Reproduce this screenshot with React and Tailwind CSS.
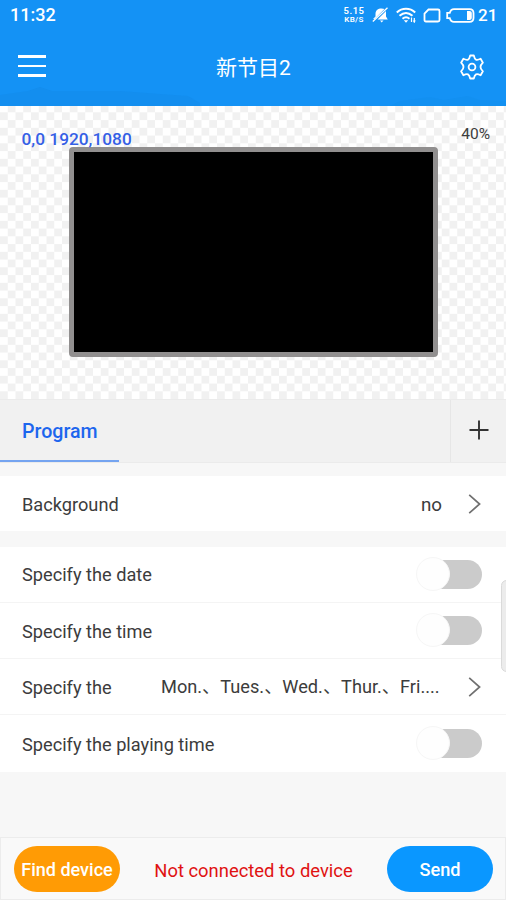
import React from "react";

function StatusBar() {
  return (
    <div className="flex h-[30px] items-center justify-between pl-[10px] pr-[10px]">
      <span className="text-[18px] font-medium leading-[30px]">11:32</span>
      <div className="flex h-[30px] items-center">
        <div className="mr-[7px] flex w-[22px] flex-col items-center font-semibold">
          <span className="h-[9px] text-[9.5px] leading-[9px] tracking-[0.5px]">5.15</span>
          <span className="mt-[1px] h-[8px] text-[8px] leading-[8px] tracking-[0.3px]">KB/S</span>
        </div>
        <svg className="mr-[7px]" width="17" height="16" viewBox="0 0 17 16" fill="white">
          <path d="M1 12 L3.500 9.500 V7 C3.500 3.500 6 1.800 8 1.500 C10 1.200 11.500 1.500 12.500 2 L2.500 12Z" />
          <path d="M14 4 V9.500 L15.800 12.500 H5.500Z" />
          <path d="M8 13.500 H11.500 L9.700 15.500Z" />
          <path d="M0.800 14.500 L15.500 0.800" stroke="white" strokeWidth="1.300" />
        </svg>
        <svg className="mr-[6px]" width="21" height="17" viewBox="0 0 21 17" fill="none" stroke="white" strokeWidth="2">
          <path d="M0.800 5.500 C6 0.600 14 0.600 19.200 5.500" />
          <path d="M3.500 8.800 C7.600 5.200 12.400 5.200 16.500 8.800" />
          <path d="M6.500 11.700 C9 9.700 11 9.700 13.500 11.700" />
          <path d="M7.800 13.200 L10 15.800 L12.200 13.200Z" fill="white" stroke="none" />
          <path d="M15.500 10.500 V15 M18.300 11 V15.500" strokeWidth="1.200" />
          <path d="M16.800 13.500 L18.300 16 L19.800 13.500Z" fill="white" stroke="none" />
        </svg>
        <svg className="mr-[5px]" width="18" height="15" viewBox="0 0 18 15" fill="none" stroke="white" strokeWidth="1.800">
          <path d="M5.500 1.500 H15 Q16.500 1.500 16.500 3 V12 Q16.500 13.500 15 13.500 H3 Q1.500 13.500 1.500 12 V5.500Z" />
        </svg>
        <svg className="mr-[3px]" width="29" height="15" viewBox="0 0 29 15" fill="none" stroke="white" strokeWidth="1.800">
          <path d="M3.800 4.800 C4.500 2.200 6 1.200 8 1.200 H23.500 Q27.500 1.200 27.500 5 V10 Q27.500 13.800 23.500 13.800 H8 C6 13.800 4.500 12.800 3.800 10.200 H1.200 V4.800Z" />
          <path d="M21 3 H23.500 Q25.800 3 25.800 5 V10 Q25.800 12 23.500 12 H21Z" fill="white" stroke="none" />
        </svg>
        <span className="w-[18px] text-[17px] font-medium leading-[28px]">21</span>
      </div>
    </div>
  );
}

function Header() {
  return (
    <header className="relative h-[106px] shrink-0 bg-[#1492f5] text-white">
      <svg className="absolute bottom-0 left-0" width="506" height="20" viewBox="0 0 506 20" fill="#118ae9" fillOpacity="0.5">
        <path d="M0 9 L28 5 L40 1 L52 5 L120 5 L160 8 L188 10 L200 17 L200 20 H0Z" />
        <path d="M390 20 L400 15 L430 11 L444 14 L468 10 L480 14 L506 15 V20Z" fillOpacity="0.300" />
      </svg>
      <StatusBar />
      <div className="relative flex h-[76px] items-center justify-between pl-[18px] pr-[21px]">
        <button aria-label="Menu" className="-mt-[4px] flex w-[28px] flex-col gap-[7px]">
          <span className="h-[2.500px] bg-white" />
          <span className="h-[2.500px] bg-white" />
          <span className="h-[2.500px] bg-white" />
        </button>
        <h1 className="ml-[2px] text-[21px] leading-[28px]">新节目2</h1>
        <svg className="-mt-[2px]" width="26" height="26" viewBox="0 0 26 26" fill="none" stroke="white" strokeWidth="1.800" strokeLinejoin="round">
          <path d="M11.200 1.500 H14.800 Q15.500 4.800 17 5.600 Q18.500 6.300 21.600 4.800 L23.900 8.700 Q21.500 11 21.500 13 Q21.500 15 23.900 17.300 L21.600 21.200 Q18.500 19.700 17 20.400 Q15.500 21.200 14.800 24.500 H11.200 Q10.500 21.200 9 20.400 Q7.500 19.700 4.400 21.200 L2.100 17.300 Q4.500 15 4.500 13 Q4.500 11 2.100 8.700 L4.400 4.800 Q7.500 6.300 9 5.600 Q10.500 4.800 11.200 1.500Z" />
          <circle cx="13" cy="13" r="3.400" />
        </svg>
      </div>
    </header>
  );
}

function Chevron() {
  return (
    <svg width="14" height="20" viewBox="0 0 14 20" fill="none" stroke="#707070" strokeWidth="1.700">
      <path d="M1.200 0.800 L11.600 10 L1.200 19.200" />
    </svg>
  );
}

function Toggle() {
  return (
    <span className="relative -mt-[1px] h-[34px] w-[66px]">
      <span className="absolute left-[6px] top-[3px] h-[29px] w-[60px] rounded-full bg-[#cbcbcb]" />
      <span className="absolute left-0 top-0 size-[34px] rounded-full border border-[#f6f6f6] bg-[#fefefe]" />
    </span>
  );
}

function Row({ label, last, children }) {
  return (
    <div className={`flex h-[56.250px] items-center justify-between border-[#f4f4f4] bg-white pl-[22px] pr-[24px] ${last ? "" : "border-b"}`}>
      <span className="pt-[2px]">{label}</span>
      {children}
    </div>
  );
}

export default function App() {
  return (
    <main className="relative flex h-[900px] w-[506px] flex-col overflow-hidden bg-[#f7f7f7] font-[Roboto,'Noto_Sans_CJK_SC',sans-serif] text-[18.2px] text-[#3c3c3c]">
      <Header />
      <section className="relative h-[293px] shrink-0 bg-white bg-[conic-gradient(#f1f1f1_25%,#fff_0_50%,#f1f1f1_0_75%,#fff_0)] bg-[length:15.500px_15.500px] bg-[position:0px_-1.450px] pl-[69px] pt-[41px]">
        <div className="h-[210px] w-[369px] rounded-[4px] border-[5px] border-[#918f8f] bg-black" />
        <span className="absolute left-[21.5px] top-[22px] text-[17.3px] font-medium leading-[22px] text-[#3560e6]">0,0 1920,1080</span>
        <span className="absolute right-[16px] top-[18px] text-[15.5px] leading-[20px]">40%</span>
      </section>
      <nav className="flex h-[64px] shrink-0 border-y border-[#ebebeb] bg-[#f1f1f1]">
        <div className="h-[62px] w-[119px] border-b-2 border-[#75a4f0] pl-[22px] text-[19.6px] font-medium leading-[63px] text-[#1d66ee]">Program</div>
        <button aria-label="Add" className="ml-auto flex w-[56px] items-center justify-center border-l border-[#e6e6e6]">
          <svg className="-mt-[2px]" width="20" height="20" viewBox="0 0 20 20" stroke="#333" strokeWidth="1.900">
            <path d="M0.500 10 H19.500 M10 0.500 V19.500" />
          </svg>
        </button>
      </nav>
      <section className="mt-[13px] flex h-[55px] shrink-0 items-center bg-white pl-[22px] pr-[24px]">
        <span className="pt-[2px]">Background</span>
        <span className="ml-auto mr-[26px] pt-[3px] text-[18.8px]">no</span>
        <Chevron />
      </section>
      <section className="mt-[15.5px] shrink-0">
        <Row label="Specify the date"><Toggle /></Row>
        <Row label="Specify the time"><Toggle /></Row>
        <Row label="Specify the">
          <span className="ml-auto mr-[29px] w-[278px] whitespace-nowrap pt-[1px]">Mon.、Tues.、Wed.、Thur.、Fri....</span>
          <Chevron />
        </Row>
        <Row label="Specify the playing time" last><Toggle /></Row>
      </section>
      <footer className="mt-auto flex h-[63px] shrink-0 items-center justify-between border border-[#ececec] bg-[#f9f9f9] pl-[13px] pr-[12px]">
        <button className="h-[46px] w-[106px] whitespace-nowrap rounded-full bg-[#ff9b05] pt-[2px] text-[18px] font-medium text-white">Find device</button>
        <span className="pt-[4px] text-[18.4px] text-[#e01212]">Not connected to device</span>
        <button className="h-[46px] w-[106px] rounded-full bg-[#0a97ff] pt-[2px] text-[18.2px] font-medium text-white">Send</button>
      </footer>
      <div className="absolute right-[-6px] top-[580px] h-[92px] w-[11px] rounded-[6px] border border-[#dadada] bg-[#ececec]" />
    </main>
  );
}
